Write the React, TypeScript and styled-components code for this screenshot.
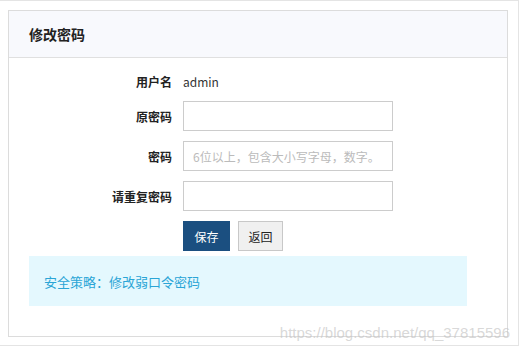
import styled, { createGlobalStyle } from 'styled-components'

const GlobalStyle = createGlobalStyle`
    html, body {
        margin: 0;
        padding: 0;
        background: #ffffff;
    }
    body {
        font-family: "Noto Sans CJK SC", "Liberation Sans", sans-serif;
        font-size: 12px;
        color: #333333;
    }
`

const Frame = styled.div`
    position: relative;
    box-sizing: border-box;
    width: 519px;
    height: 346px;
    padding: 9px 10px 8px 8px;
    border-top: 1px solid #e4e4e4;
    border-right: 1px solid #e4e4e4;
    border-bottom: 1px solid #e4e4e4;
`

const Panel = styled.div`
    box-sizing: border-box;
    width: 500px;
    height: 327px;
    border: 1px solid #dcdcdc;
    display: flex;
    flex-direction: column;
`

const Header = styled.div`
    height: 46px;
    background: #f8f9fd;
    border-bottom: 1px solid #e0e0e0;
    display: flex;
    align-items: center;
    padding-left: 20px;
    font-size: 14px;
    font-weight: bold;
    color: #222222;
`

const Body = styled.div`
    padding: 13px 0 0 0;
    display: flex;
    flex-direction: column;
    gap: 10px;
`

const Row = styled.div<{ $h?: number }>`
    display: grid;
    grid-template-columns: 163px 210px;
    column-gap: 11px;
    align-items: center;
    height: ${({ $h }) => $h ?? 30}px;
`

const Label = styled.label`
    text-align: right;
    font-weight: bold;
    color: #222222;
    font-size: 12px;
`

const Value = styled.span`
    font-size: 12px;
    color: #333333;
`

const Input = styled.input`
    box-sizing: border-box;
    width: 210px;
    height: 30px;
    border: 1px solid #cccccc;
    padding: 0 9px;
    font-family: "Noto Sans CJK SC", "Liberation Sans", sans-serif;
    font-size: 12px;
    outline: none;
    &::placeholder {
        color: #bbbbbb;
    }
`

const Buttons = styled.div`
    display: flex;
    gap: 8px;
`

const Button = styled.button<{ $primary?: boolean }>`
    box-sizing: border-box;
    height: 30px;
    padding: 0;
    width: ${({ $primary }) => ($primary ? 47 : 45)}px;
    font-family: "Noto Sans CJK SC", "Liberation Sans", sans-serif;
    font-size: 12px;
    border: 1px solid ${({ $primary }) => ($primary ? '#1b4f80' : '#c8c8c8')};
    background: ${({ $primary }) => ($primary ? '#1b4f80' : '#f0f0f0')};
    color: ${({ $primary }) => ($primary ? '#ffffff' : '#222222')};
`

const Notice = styled.div`
    margin: -5px 0 0 20px;
    width: 438px;
    height: 50px;
    background: #e4f8fe;
    display: flex;
    align-items: center;
    padding-left: 15px;
    box-sizing: border-box;
    font-size: 13px;
    color: #2aa5d6;
`

const Watermark = styled.span`
    position: absolute;
    right: 8px;
    bottom: 4px;
    font-family: "Liberation Sans", Arial, sans-serif;
    font-size: 15px;
    color: rgba(195, 195, 195, 0.65);
    pointer-events: none;
`

const App = () => {
  return (
        <>
            <GlobalStyle />
            <Frame>
                <Panel>
                    <Header>修改密码</Header>
                    <Body>
                        <Row $h={20}>
                            <Label>用户名</Label>
                            <Value>admin</Value>
                        </Row>
                        <Row>
                            <Label>原密码</Label>
                            <Input type="password" />
                        </Row>
                        <Row>
                            <Label>密码</Label>
                            <Input type="password" placeholder="6位以上，包含大小写字母，数字。" />
                        </Row>
                        <Row>
                            <Label>请重复密码</Label>
                            <Input type="password" />
                        </Row>
                        <Row>
                            <span />
                            <Buttons>
                                <Button $primary>保存</Button>
                                <Button>返回</Button>
                            </Buttons>
                        </Row>
                        <Notice>安全策略：修改弱口令密码</Notice>
                    </Body>
                </Panel>
                <Watermark>https://blog.csdn.net/qq_37815596</Watermark>
            </Frame>
        </>
  )
}

export default App
